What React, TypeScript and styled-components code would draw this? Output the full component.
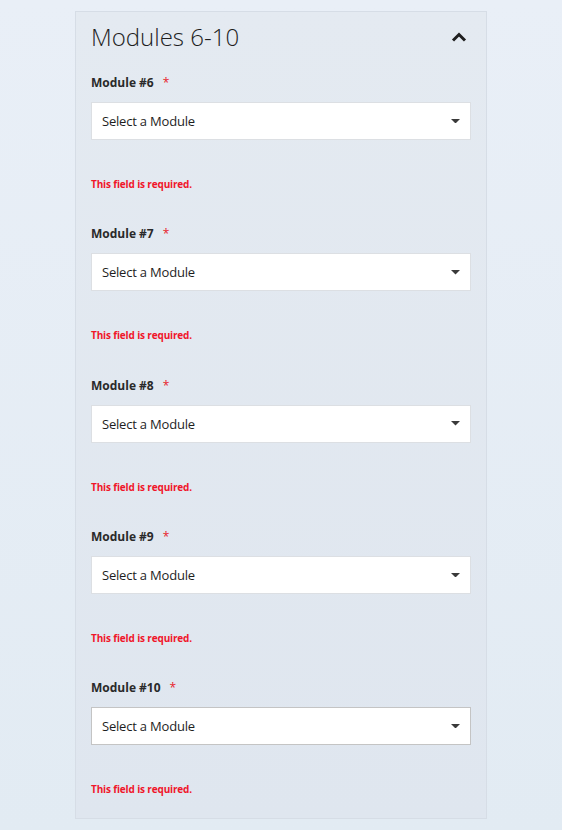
import React from 'react';
import styled, { createGlobalStyle } from 'styled-components';

const GlobalStyle = createGlobalStyle`
  html, body {
    margin: 0;
    padding: 0;
  }
  body {
    min-height: 830px;
    background: linear-gradient(180deg, #e9eff7 0%, #e2ebf3 100%);
    font-family: "Open Sans", "Noto Sans", sans-serif;
    color: #222;
  }
`;

const modules = [6, 7, 8, 9, 10];

const App: React.FC = () => {
  return (
    <>
      <GlobalStyle />
      <Page>
        <Panel>
          <Header>
            <Title>Modules 6-10</Title>
            <ChevronUp viewBox="0 0 16 12" aria-hidden>
              <path d="M2 9.5 L8 3.5 L14 9.5" fill="none" stroke="#1f1f1f" strokeWidth="3" strokeLinejoin="miter" />
            </ChevronUp>
          </Header>
          {modules.map((n, i) => (
            <Field key={n}>
              <Label>
                Module #{n}
                <Required>*</Required>
              </Label>
              <Select $strong={i === modules.length - 1}>
                <span>Select a Module</span>
                <Caret viewBox="0 0 10 5" aria-hidden>
                  <path d="M0 0 H10 L5 5 Z" fill="#3a3a3a" />
                </Caret>
              </Select>
              <Error>This field is required.</Error>
            </Field>
          ))}
        </Panel>
      </Page>
    </>
  );
};

const Page = styled.div`
  display: flex;
  justify-content: center;
  padding-top: 11px;
`;

const Panel = styled.section`
  width: 412px;
  box-sizing: border-box;
  padding: 10px 15px 22px;
  background: linear-gradient(180deg, #e4eaf1 0%, #dfe6ef 100%);
  border: 1px solid #d6dde6;
`;

const Header = styled.div`
  display: flex;
  align-items: center;
  justify-content: space-between;
  height: 30px;
  margin-bottom: 23px;
`;

const Title = styled.h2`
  margin: 0;
  font-size: 24px;
  font-weight: 300;
  line-height: 30px;
  color: #1e1e1e;
`;

const ChevronUp = styled.svg`
  width: 16px;
  height: 12px;
  margin-right: 4px;
`;

const Field = styled.div`
  display: flex;
  flex-direction: column;
  & + & {
    margin-top: 35.25px;
  }
`;

const Label = styled.label`
  font-size: 12px;
  font-weight: 700;
  line-height: 16px;
  color: #2a2a2a;
`;

const Required = styled.span`
  color: #e8202a;
  margin-left: 9px;
  font-weight: 400;
`;

const Select = styled.div<{ $strong?: boolean }>`
  margin-top: 11px;
  height: 38px;
  box-sizing: border-box;
  display: flex;
  align-items: center;
  justify-content: space-between;
  padding: 0 10px 0 10px;
  background: #fff;
  border: 1px solid ${p => (p.$strong ? '#c4c4c4' : '#dcdfe3')};
  font-size: 13px;
  letter-spacing: -0.2px;
  color: #1e1e1e;
`;

const Caret = styled.svg`
  width: 9px;
  height: 4.5px;
`;

const Error = styled.div`
  margin-top: 37px;
  font-size: 10px;
  font-weight: 700;
  line-height: 14px;
  letter-spacing: -0.15px;
  color: #f0152a;
`;

export default App;
